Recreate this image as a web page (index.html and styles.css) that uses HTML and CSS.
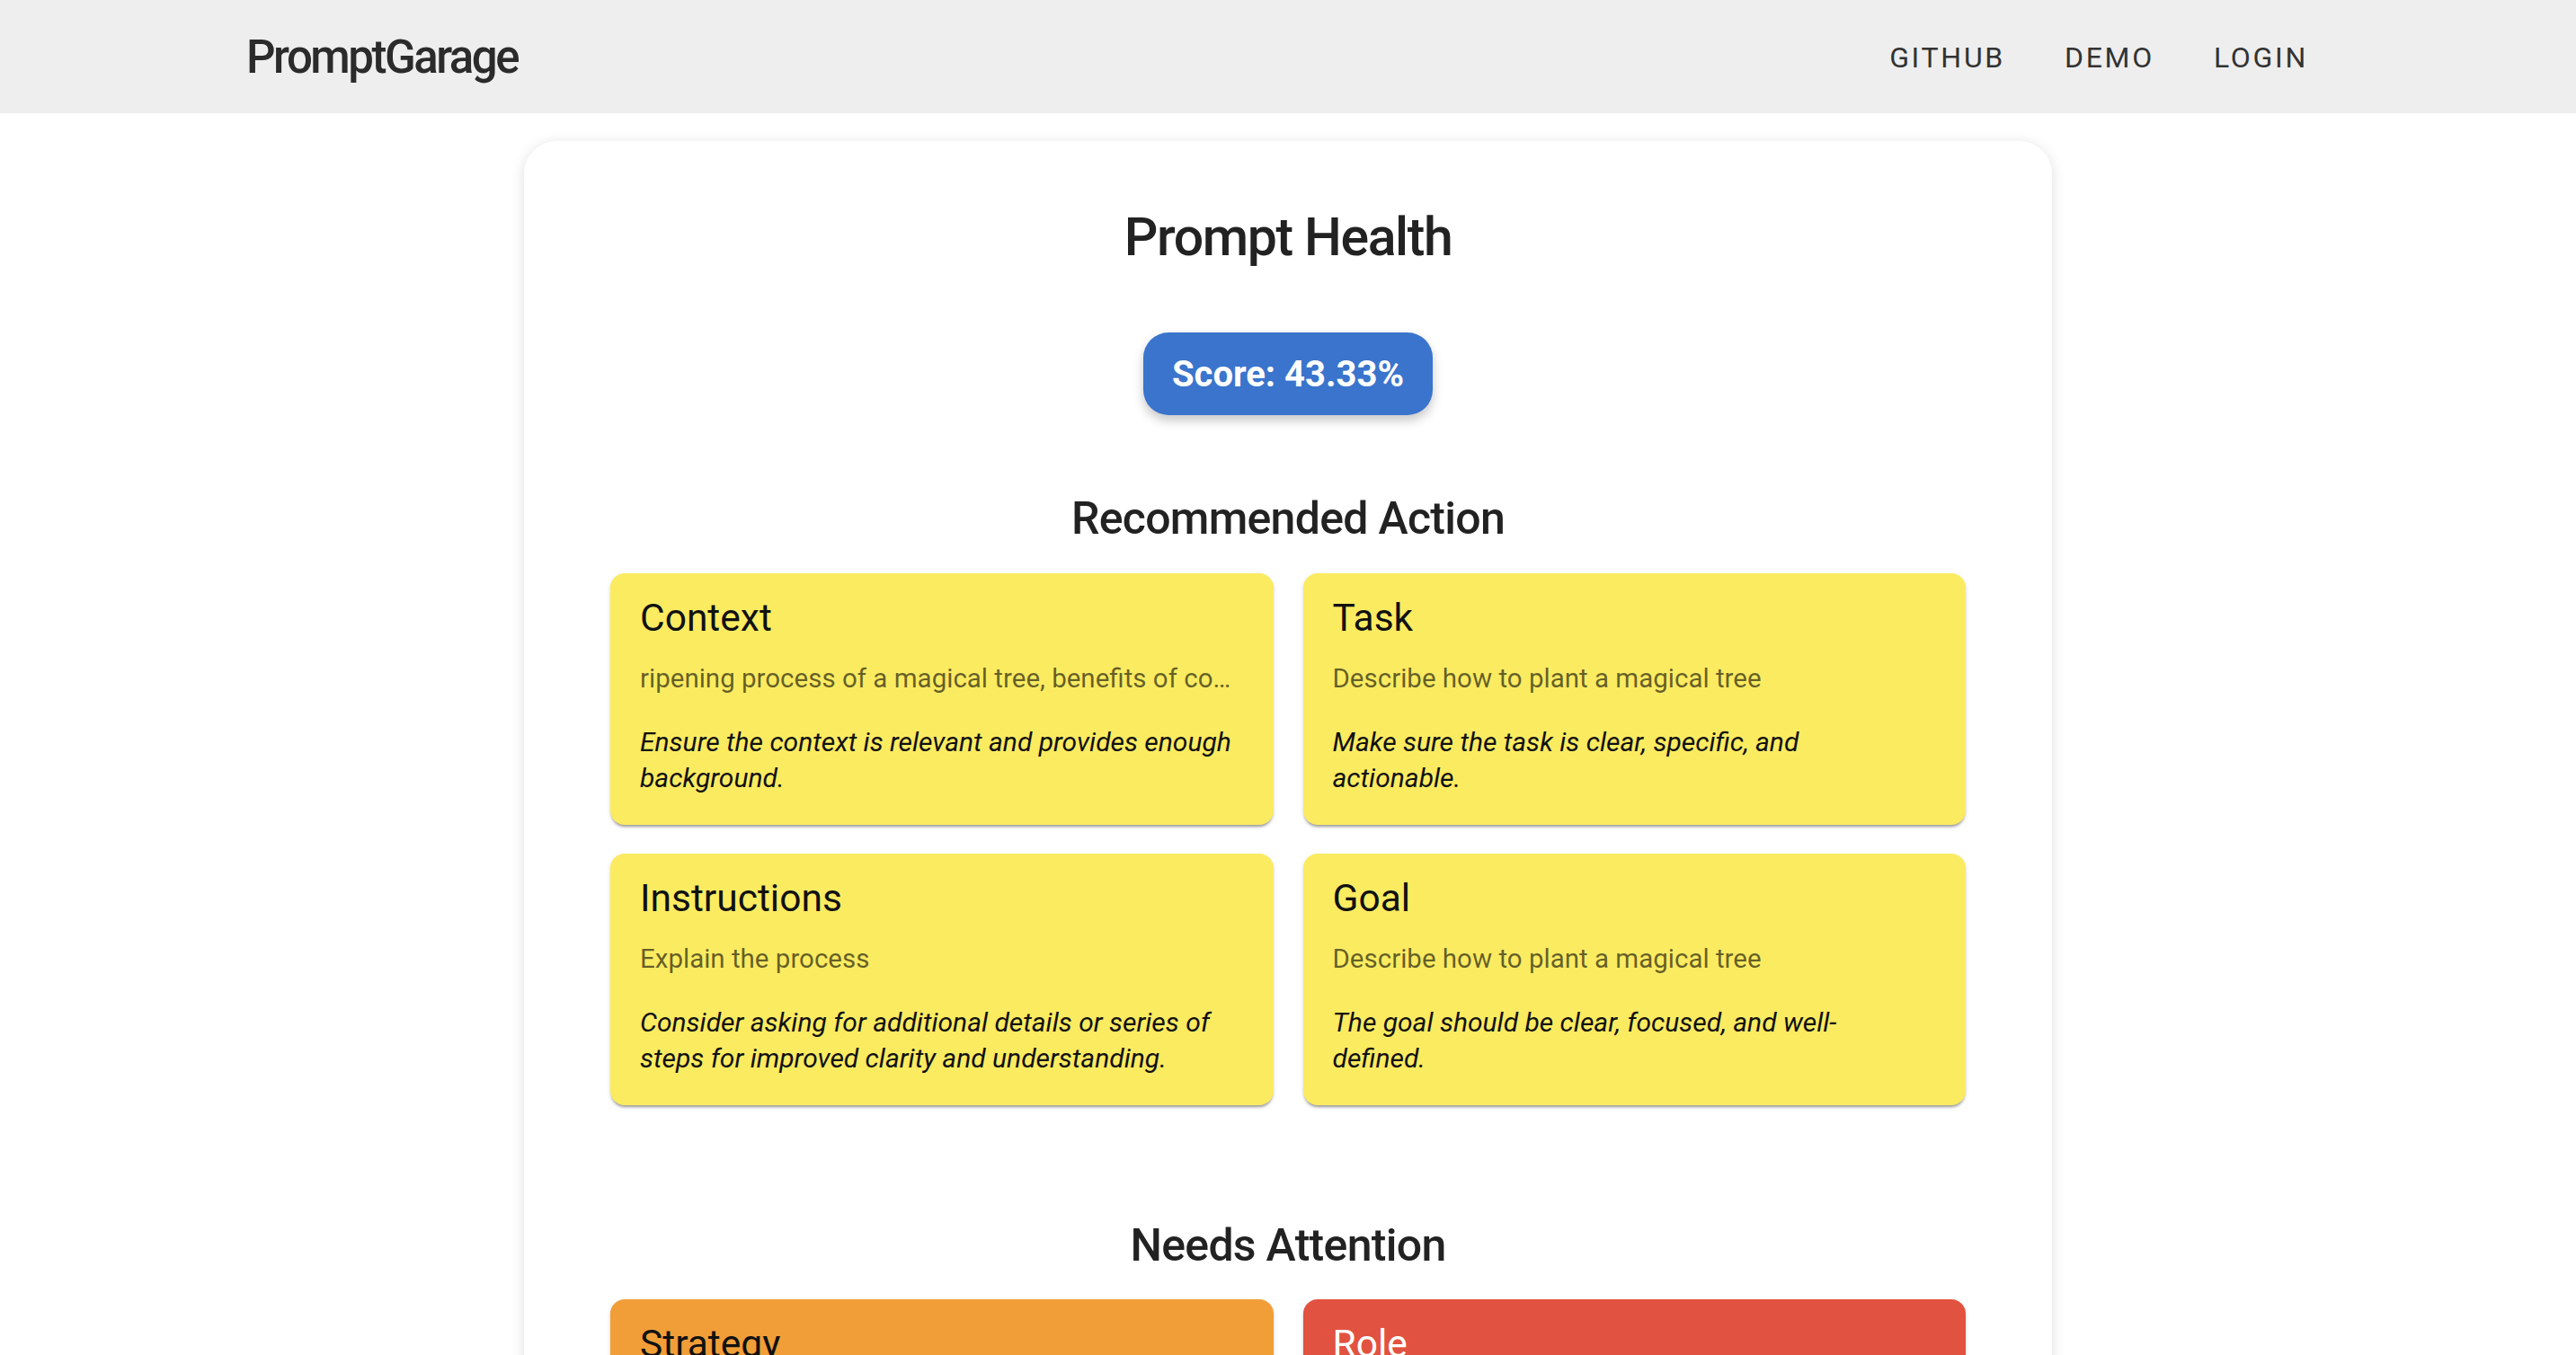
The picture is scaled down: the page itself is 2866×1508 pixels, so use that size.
FILE: index.html
```html
<!DOCTYPE html>
<html lang="en">
<head>
<meta charset="utf-8">
<title>PromptGarage - Prompt Health</title>
<link rel="stylesheet" href="styles.css">
</head>
<body>
<header class="topbar">
  <div class="logo">PromptGarage</div>
  <nav class="nav">
    <a class="nav-link" href="#">GITHUB</a>
    <a class="nav-link" href="#">DEMO</a>
    <a class="nav-link" href="#">LOGIN</a>
  </nav>
</header>

<main class="panel">
  <h1 class="panel-title">Prompt Health</h1>
  <div class="score-row">
    <div class="score">Score: 43.33%</div>
  </div>

  <section class="section">
    <h2 class="section-title">Recommended Action</h2>
    <div class="grid">
      <div class="card card-yellow">
        <div class="card-title">Context</div>
        <div class="card-sub">ripening process of a magical tree, benefits of consuming the fruit of a magical tree</div>
        <div class="card-note">Ensure the context is relevant and provides enough background.</div>
      </div>
      <div class="card card-yellow">
        <div class="card-title">Task</div>
        <div class="card-sub">Describe how to plant a magical tree</div>
        <div class="card-note">Make sure the task is clear, specific, and<br>actionable.</div>
      </div>
      <div class="card card-yellow">
        <div class="card-title">Instructions</div>
        <div class="card-sub">Explain the process</div>
        <div class="card-note">Consider asking for additional details or series of<br>steps for improved clarity and understanding.</div>
      </div>
      <div class="card card-yellow">
        <div class="card-title">Goal</div>
        <div class="card-sub">Describe how to plant a magical tree</div>
        <div class="card-note">The goal should be clear, focused, and well-<br>defined.</div>
      </div>
    </div>
  </section>

  <section class="section section-attention">
    <h2 class="section-title">Needs Attention</h2>
    <div class="grid">
      <div class="card card-orange">
        <div class="card-title">Strategy</div>
        <div class="card-sub">No strategy provided</div>
        <div class="card-note">Describe the approach or steps the model should follow.</div>
      </div>
      <div class="card card-red">
        <div class="card-title">Role</div>
        <div class="card-sub">No role provided</div>
        <div class="card-note">Assign a role or persona to guide the tone and expertise.</div>
      </div>
    </div>
  </section>
</main>
</body>
</html>
```

FILE: styles.css
```css
html, body {
  margin: 0;
  padding: 0;
  background: #ffffff;
}

body {
  font-family: Roboto, "Liberation Sans", Arial, sans-serif;
  color: #212121;
}

.topbar {
  height: 126px;
  background: #eeeeee;
  display: flex;
  align-items: center;
  justify-content: space-between;
  padding: 0 298px 0 274px;
  box-sizing: border-box;
}

.logo {
  font-size: 51px;
  font-weight: 500;
  letter-spacing: -2.5px;
  color: #2b2b2b;
  line-height: 1;
}

.nav {
  display: flex;
  gap: 66px;
  align-items: center;
  padding-top: 1px;
}

.nav-link {
  font-size: 32px;
  letter-spacing: 2.7px;
  color: #333333;
  text-decoration: none;
  line-height: 1;
}

.panel {
  width: 1700px;
  margin: 31px auto 0;
  box-sizing: border-box;
  padding: 71px 96px 120px;
  background: #ffffff;
  border-radius: 36px;
  box-shadow: 0 3px 16px rgba(0, 0, 0, 0.13);
}

.panel-title {
  margin: 0;
  text-align: center;
  font-size: 59px;
  line-height: 72px;
  font-weight: 500;
  letter-spacing: -1.4px;
  color: #222222;
}

.score-row {
  display: flex;
  justify-content: center;
  margin-top: 70px;
}

.score {
  height: 92px;
  box-sizing: border-box;
  padding: 0 32px;
  display: flex;
  align-items: center;
  border-radius: 28px;
  background: #3a74cc;
  color: #ffffff;
  font-size: 40px;
  font-weight: 700;
  letter-spacing: 0;
  box-shadow: 0 6px 12px rgba(0, 0, 0, 0.22);
}

.section-title {
  margin: 84px 0 30px;
  text-align: center;
  font-size: 50px;
  line-height: 62px;
  font-weight: 500;
  letter-spacing: -0.7px;
  color: #222222;
}

.section-attention .section-title {
  margin-top: 125px;
  margin-bottom: 29px;
}

.grid {
  display: grid;
  grid-template-columns: 1fr 1fr;
  gap: 32px 33px;
}

.card {
  border-radius: 16px;
  padding: 27px 33px 32px;
  box-shadow: 0 4px 3px -2px rgba(0, 0, 0, 0.28), 0 2px 3px rgba(0, 0, 0, 0.10), 0 2px 6px rgba(0, 0, 0, 0.08);
  color: #111111;
  min-width: 0;
}

.card-yellow {
  background: #fbeb61;
}

.card-orange {
  background: #f19e38;
}

.card-red {
  background: #e25240;
  color: #ffffff;
}

.card-title {
  font-size: 42.5px;
  line-height: 46px;
  letter-spacing: 0;
}

.card-sub {
  margin-top: 24px;
  font-size: 29.5px;
  line-height: 40px;
  letter-spacing: 0;
  color: rgba(0, 0, 0, 0.6);
  white-space: nowrap;
  overflow: hidden;
  text-overflow: ellipsis;
}

.card-red .card-sub {
  color: rgba(255, 255, 255, 0.75);
}

.card-note {
  margin-top: 31px;
  font-size: 30px;
  line-height: 40px;
  font-style: italic;
  letter-spacing: 0;
}
```
